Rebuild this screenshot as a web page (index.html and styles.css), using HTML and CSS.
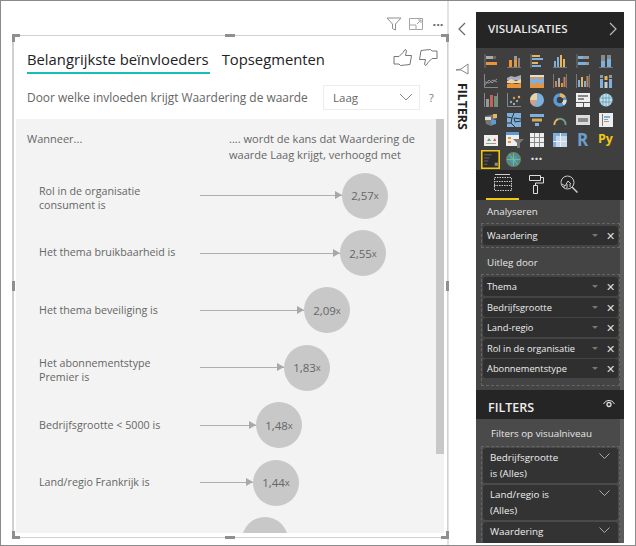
FILE: index.html
```html
<!DOCTYPE html>
<html lang="nl">
<head>
<meta charset="utf-8">
<title>Belangrijkste beïnvloeders</title>
<link rel="stylesheet" href="styles.css">
</head>
<body>
<div class="app">
  <main class="canvas">
    <div class="visual-tools">
      <svg class="tool" width="16" height="14" viewBox="0 0 16 14"><path d="M1 1h14L9.500 7v6l-3-1.500V7z" fill="none" stroke="#8f8f8f"/></svg>
      <svg class="tool" width="14" height="12" viewBox="0 0 14 12"><path d="M.5.500h13v11H.5zM7 11.500V7H.5M8 6l4-4M9 2h3v3" fill="none" stroke="#a5a5a5"/></svg>
      <span class="dots">···</span>
    </div>
    <section class="visual">
      <i class="h tl"></i><i class="h tr"></i><i class="h bl"></i><i class="h br"></i>
      <i class="m mt"></i><i class="m mb"></i><i class="m ml"></i><i class="m mr"></i>
      <div class="tabs">
        <span class="tab active">Belangrijkste beïnvloeders</span>
        <span class="tab">Topsegmenten</span>
        <span class="thumbs">
          <svg width="20" height="18" viewBox="0 0 20 18"><path d="M1 7.500h5l4-4 2-3 1.500 1-1 5h6l-1.500 9-9.500 1-1.500-1.500H1z" fill="none" stroke="#777"/></svg>
          <svg width="20" height="18" viewBox="0 0 20 18"><path d="M19 9.500h-5l-4 4-2 3-1.500-1 1-5h-6l1.500-9 9.500-1 1.500 1.500H19z" fill="none" stroke="#777"/></svg>
        </span>
      </div>
      <div class="question">
        <span class="q-text">Door welke invloeden krijgt Waardering de waarde</span>
        <span class="select">Laag<svg width="14" height="8" viewBox="0 0 14 8"><path d="M1 1l6 6 6-6" fill="none" stroke="#888"/></svg></span>
        <span class="help">?</span>
      </div>
      <div class="chart">
        <div class="scroll"></div>
        <div class="chart-head">
          <span>Wanneer...</span>
          <span class="chart-head-r">.... wordt de kans dat Waardering de waarde Laag krijgt, verhoogd met</span>
        </div>
        <div class="row">
          <span class="label two">Rol in de organisatie consument is</span>
          <span class="line" style="width:142px"></span><span class="bubble">2,57<small>x</small></span>
        </div>
        <div class="row">
          <span class="label">Het thema bruikbaarheid is</span>
          <span class="line" style="width:140px"></span><span class="bubble">2,55<small>x</small></span>
        </div>
        <div class="row">
          <span class="label">Het thema beveiliging is</span>
          <span class="line" style="width:104px"></span><span class="bubble">2,09<small>x</small></span>
        </div>
        <div class="row">
          <span class="label two">Het abonnementstype Premier is</span>
          <span class="line" style="width:84px"></span><span class="bubble">1,83<small>x</small></span>
        </div>
        <div class="row">
          <span class="label">Bedrijfsgrootte &lt; 5000 is</span>
          <span class="line" style="width:56px"></span><span class="bubble">1,48<small>x</small></span>
        </div>
        <div class="row">
          <span class="label">Land/regio Frankrijk is</span>
          <span class="line" style="width:53px"></span><span class="bubble">1,44<small>x</small></span>
        </div>
        <div class="row">
          <span class="label"></span>
          <span class="line hidden" style="width:42px"></span><span class="bubble"></span>
        </div>
      </div>
    </section>
  </main>

  <aside class="strip">
    <svg class="collapse" width="9" height="14" viewBox="0 0 9 14"><path d="M8 1L2 7l6 6" fill="none" stroke="#666" stroke-width="1.200"/></svg>
    <svg class="funnel" width="14" height="12" viewBox="0 0 14 12"><path d="M13 1v10L6 7H1l5-1z" fill="none" stroke="#888"/></svg>
    <span class="strip-title">FILTERS</span>
  </aside>

  <div class="pane">
    <header class="pane-head"><span>VISUALISATIES</span>
      <svg width="8" height="14" viewBox="0 0 8 14"><path d="M1 1l6 6-6 6" fill="none" stroke="#bbb" stroke-width="1.200"/></svg>
    </header>
    <div class="gallery">
      <svg viewBox="0 0 14 14"><path d="M1 0v14" stroke="#777"/><path d="M2 2h7v3H2z" fill="#aaa"/><path d="M2 8h11v3H2z" fill="#e8943a"/><path d="M9 2h3v3H9z" fill="#666"/></svg>
      <svg viewBox="0 0 14 14"><path d="M0 13.500h14" stroke="#777"/><path d="M2 6h3v7H2z" fill="#e8943a"/><path d="M7 2h3v11H7z" fill="#e8943a"/><path d="M7 2h3v4H7z" fill="#999"/><path d="M11 4h2v9h-2z" fill="#888"/></svg>
      <svg viewBox="0 0 14 14"><path d="M1 0v14" stroke="#777"/><path d="M2 1h8v2H2z" fill="#e8b45c"/><path d="M2 4h11v2H2z" fill="#7db0dc"/><path d="M2 8h6v2H2z" fill="#e8b45c"/><path d="M2 11h9v2H2z" fill="#7db0dc"/></svg>
      <svg viewBox="0 0 14 14"><path d="M0 13.500h14" stroke="#777"/><path d="M1 7h2v6H1z" fill="#7db0dc"/><path d="M4 3h2v10H4z" fill="#7db0dc"/><path d="M7 1h2v12H7z" fill="#e8b45c"/><path d="M10 5h2v8h-2z" fill="#e8b45c"/></svg>
      <svg viewBox="0 0 14 14"><path d="M1 0v14" stroke="#777"/><path d="M2 2h5v3H2z" fill="#7db0dc"/><path d="M7 2h6v3H7z" fill="#999"/><path d="M2 8h8v3H2z" fill="#7db0dc"/><path d="M10 8h3v3h-3z" fill="#999"/></svg>
      <svg viewBox="0 0 14 14"><path d="M0 13.500h14" stroke="#777"/><path d="M2 1h4v6H2z" fill="#8a8a8a"/><path d="M2 7h4v6H2z" fill="#7db0dc"/><path d="M8 1h4v4H8z" fill="#8a8a8a"/><path d="M8 5h4v8H8z" fill="#7db0dc"/></svg>

      <svg viewBox="0 0 14 14"><path d="M.5 0v13.500H14" fill="none" stroke="#888"/><path d="M1 11l4-5 3 3 5-4" fill="none" stroke="#c9825a"/><path d="M1 8l4 1 4-3 4 2" fill="none" stroke="#6d9ec9"/></svg>
      <svg viewBox="0 0 14 14"><path d="M0 4l4-2 4 1 6-2v5H0z" fill="#aab"/><path d="M0 7l4-2 5 2 5-2v4H0z" fill="#e9d2a8"/><path d="M0 10l5-1 4 1 5-1v5H0z" fill="#e8943a"/></svg>
      <svg viewBox="0 0 14 14"><path d="M0 3h14v11H0z" fill="#e8943a"/><path d="M0 3l3 3 4-3 3 3 4-3v5l-4 3-3-3-3 3-4-3z" fill="#7db0dc"/><path d="M0 1h14v2H0z" fill="#ddd"/></svg>
      <svg viewBox="0 0 14 14"><path d="M.5 0v14M13.500 0v14" stroke="#777"/><path d="M2 7h2v6H2z" fill="#c9825a"/><path d="M5 4h2v9H5z" fill="#aaa"/><path d="M8 9h2v4H8z" fill="#e8943a"/><path d="M10.500 3h2v10h-2z" fill="#c9825a"/></svg>
      <svg viewBox="0 0 14 14"><path d="M.5 0v14M13.500 0v14" stroke="#777"/><path d="M2 6h2v7H2z" fill="#7db0dc"/><path d="M5 3h2v10H5z" fill="#e8b45c"/><path d="M8 7h2v6H8z" fill="#7db0dc"/><path d="M10.500 2h2v11h-2z" fill="#c9825a"/></svg>
      <svg viewBox="0 0 14 14"><path d="M1 5h3v9H1z" fill="#7db0dc"/><path d="M5.500 2h3v4h-3z" fill="#e8b45c"/><path d="M5.500 8h3v6h-3z" fill="#ccc"/><path d="M10 5h3v9h-3z" fill="#7db0dc"/><path d="M1 1h3v3H1zM10 1h3v3h-3z" fill="#999"/></svg>

      <svg viewBox="0 0 14 14"><path d="M.5 0v14M13.500 0v14" stroke="#888"/><path d="M2 6h3v8H2z" fill="#999"/><path d="M6 2h3v12H6z" fill="#c9605a"/><path d="M10 3h3v11h-3z" fill="#6c8f78"/></svg>
      <svg viewBox="0 0 14 14"><path d="M.5 0v13.500H14" fill="none" stroke="#888"/><circle cx="4" cy="9" r="1.200" fill="#7db0dc"/><circle cx="7" cy="5" r="1.200" fill="#e8943a"/><circle cx="10" cy="8" r="1.200" fill="#7db0dc"/><circle cx="12" cy="4" r="1.200" fill="#e8b45c"/><circle cx="7" cy="11" r="1" fill="#ccc"/></svg>
      <svg viewBox="0 0 14 14"><circle cx="7" cy="7" r="7" fill="#7db0dc"/><path d="M7 7V0a7 7 0 0 0-7 7z" fill="#e9d2a8"/><path d="M7 7H0a7 7 0 0 0 4 6z" fill="#d9a07a"/></svg>
      <svg viewBox="0 0 14 14"><circle cx="7" cy="7" r="5" fill="none" stroke="#5b9bd5" stroke-width="3.500"/><path d="M7 2a5 5 0 0 1 4 2.500" fill="none" stroke="#e8b45c" stroke-width="3.500"/><path d="M12 7a5 5 0 0 1-2 4" fill="none" stroke="#ddd" stroke-width="3.500"/></svg>
      <svg viewBox="0 0 14 14"><path d="M0 0h14v14H0z" fill="#eee"/><path d="M2 2h10v2H2zM2 5h6v2H2z" fill="#888"/><path d="M0 9h14v1H0zM7 10h1v4H7z" fill="#555"/></svg>
      <svg viewBox="0 0 14 14"><circle cx="7" cy="7" r="6.500" fill="#bfe0ee"/><path d="M0 5h14M0 9h14M4 1v12M10 1v12M7 0v14" stroke="#5a8fa8" stroke-width=".7"/></svg>

      <svg viewBox="0 0 14 14"><path d="M1 3l6-1 6-1v4l-3 2 1 4-4 2-5-2-1-5z" fill="#777"/><path d="M7 7l5 0v4l-5 1z" fill="#5b9bd5"/><path d="M9 1h4v4H9z" fill="#e8b45c"/><path d="M1 4h6v3H1z" fill="#ddd"/></svg>
      <svg viewBox="0 0 14 14"><path d="M0 0h14v14H0z" fill="#7db0dc"/><path d="M0 4l5 1 2-5M7 5l7 1M5 5l-1 5-4 0M4 10l4 4M8 9l6-1M7 5l1 4" fill="none" stroke="#333"/></svg>
      <svg viewBox="0 0 14 14"><path d="M0 1h14v3H0z" fill="#7db0dc"/><path d="M2 5.500h10v3H2z" fill="#e8b45c" opacity=".9"/><path d="M5 10h4v3H5z" fill="#7db0dc"/></svg>
      <svg viewBox="0 0 14 14"><path d="M1.500 12a5.500 5.500 0 0 1 4-6" fill="none" stroke="#e8b45c" stroke-width="2"/><path d="M5.500 6a5.500 5.500 0 0 1 7 6" fill="none" stroke="#6c9f8e" stroke-width="2"/></svg>
      <svg viewBox="0 0 14 14"><path d="M0 2h14v10H0z" fill="#ddd"/><path d="M2 5h10v4H2z" fill="#8a8a8a"/></svg>
      <svg viewBox="0 0 14 14"><path d="M0 0h14v14H0z" fill="#eee"/><path d="M3 1h1v12H3z" fill="#777"/><path d="M5 3h6v2H5z" fill="#7db0dc"/><path d="M5 6h4v1H5zM5 8h5v1H5z" fill="#999"/></svg>

      <svg viewBox="0 0 14 14"><path d="M0 2h14v11H0z" fill="#eee"/><path d="M5 5l2 3H3z" fill="#5aa06e"/><path d="M9 8l2-3 1 3z" fill="#d9534f"/><path d="M2 10h10v1H2z" fill="#999"/></svg>
      <svg viewBox="0 0 18 16" class="wide"><path d="M0 0h13v14H0z" fill="#eee"/><path d="M0 0h13v3H0z" fill="#5b9bd5"/><path d="M2 5h3v2H2zM2 9h3v2H2z" fill="#e8943a"/><path d="M7 7h11l-4 4v5h-3v-5z" fill="#777"/></svg>
      <svg viewBox="0 0 14 14"><path d="M0 0h14v14H0z" fill="#eee"/><path d="M4.500 0v14M9.500 0v14M0 4.500h14M0 9.500h14" stroke="#8a8a8a"/></svg>
      <svg viewBox="0 0 14 14"><path d="M0 0h14v14H0z" fill="#c5d7e8"/><path d="M0 0h14v3H0zM0 0h3v14H0z" fill="#7db0dc"/><path d="M7.500 0v14M0 8.500h14" stroke="#eee"/></svg>
      <span class="glyph r">R</span>
      <span class="glyph py">Py</span>

      <svg class="selected" viewBox="0 0 18 18"><path d="M.75.750h16.500v16.500H.75z" fill="#2c2c2c" stroke="#f2c811" stroke-width="1.500"/><path d="M3 4h7v1H3zM3 7h5v1H3zM3 10h4v1H3zM3 13h3v1H3z" fill="#666"/><path d="M13 12h3v3h-3z" fill="#8a8a8a"/></svg>
      <svg viewBox="0 0 14 14" class="globe"><circle cx="7" cy="7" r="7" fill="#5b8a78"/><path d="M3 3l4 2 3-2 1 4-4 5-3-3z" fill="#4e93d1"/><path d="M1 7h12M7 1v12M3 2l8 10" stroke="#7cc07c" stroke-width=".8"/></svg>
      <span class="glyph more">···</span>
    </div>
    <nav class="pane-tabs">
      <span class="pane-tab on"><svg width="18" height="17" viewBox="0 0 18 17"><path d="M1 .500h15" stroke="#ccc"/><path d="M.5 3.500h17v13H.5z" fill="none" stroke="#ccc" stroke-dasharray="1.500 1"/><path d="M0 7.500h18M0 11.500h18" stroke="#ccc" stroke-dasharray="1.500 1"/></svg></span>
      <span class="pane-tab"><svg width="16" height="20" viewBox="0 0 16 20"><path d="M1.500 1.500h11v5h-11zM12.500 3.500h3v5.500h-8v2.500M5.500 11.500h4v8h-4z" fill="none" stroke="#ddd"/></svg></span>
      <span class="pane-tab"><svg width="18" height="18" viewBox="0 0 18 18"><circle cx="7.500" cy="7.500" r="6.500" fill="none" stroke="#ccc"/><path d="M12 12l5.500 5.500" stroke="#ccc" stroke-width="1.500"/><path d="M2 9l3 2 3-5 3 3M4 11v2M7 9v4M10 9v3" fill="none" stroke="#ccc"/></svg></span>
    </nav>
    <div class="pane-body">
      <div class="fields">
        <div class="well-title first">Analyseren</div>
        <div class="well">
          <div class="field"><span>Waardering</span><i class="caret"></i><b class="x">✕</b></div>
        </div>
        <div class="well-title second">Uitleg door</div>
        <div class="well tall">
          <div class="field"><span>Thema</span><i class="caret"></i><b class="x">✕</b></div>
          <div class="field"><span>Bedrijfsgrootte</span><i class="caret"></i><b class="x">✕</b></div>
          <div class="field"><span>Land-regio</span><i class="caret"></i><b class="x">✕</b></div>
          <div class="field"><span>Rol in de organisatie</span><i class="caret"></i><b class="x">✕</b></div>
          <div class="field"><span>Abonnementstype</span><i class="caret"></i><b class="x">✕</b></div>
        </div>
      </div>
      <div class="filters-head"><span>FILTERS</span>
        <svg width="12" height="9" viewBox="0 0 12 9"><path d="M.5 5a6 6 0 0 1 11 0" fill="none" stroke="#ddd"/><circle cx="6" cy="5.500" r="2" fill="none" stroke="#ddd" stroke-width="1.300"/></svg>
      </div>
      <div class="filters">
        <div class="well-title level">Filters op visualniveau</div>
        <div class="well filter-well">
          <div class="card"><span>Bedrijfsgrootte<br>is (Alles)</span><svg width="11" height="6" viewBox="0 0 11 6"><path d="M.5.500l5 5 5-5" fill="none" stroke="#aaa"/></svg></div>
          <div class="card"><span>Land/regio is<br>(Alles)</span><svg width="11" height="6" viewBox="0 0 11 6"><path d="M.5.500l5 5 5-5" fill="none" stroke="#aaa"/></svg></div>
          <div class="card"><span>Waardering</span><svg width="11" height="6" viewBox="0 0 11 6"><path d="M.5.500l5 5 5-5" fill="none" stroke="#aaa"/></svg></div>
        </div>
      </div>
    </div>
  </div>
</div>
</body>
</html>
```
FILE: styles.css
```css
* { box-sizing: border-box; }
html, body { margin: 0; padding: 0; background: #fff; }
body { font-family: "Open Sans", "Noto Sans", sans-serif; overflow: hidden; }

.app {
  width: 636px; height: 546px;
  display: flex;
  border: 1px solid #8a8a8a;
  overflow: hidden;
}

/* report canvas */
.canvas { width: 448px; flex: none; padding: 11px 0 0 11px; border-right: 2px solid #e3e3e3; height: 544px; }
.visual-tools { height: 23px; display: flex; align-items: center; justify-content: flex-end; gap: 7px; padding: 1px 3px 0 0; margin-right: -2px; }
.tool { display: block; }
.dots { color: #666; font-size: 13px; font-weight: 700; width: 16px; text-align: center; line-height: 14px; }

.visual {
  position: relative;
  width: 436px; height: 503px;
  border: solid #d0d0d0; border-width: 1px 1px 1px 2px;
  padding: 0 3px 4px 2px;
  display: flex; flex-direction: column;
}
.h { position: absolute; width: 8px; height: 8px; border: solid #8f8f8f; border-width: 0; }
.tl { left: -2px; top: -2px; border-width: 3px 0 0 3px; }
.tr { right: -2px; top: -2px; border-width: 3px 3px 0 0; }
.bl { left: -2px; bottom: -2px; border-width: 0 0 3px 3px; }
.br { right: -2px; bottom: -2px; border-width: 0 3px 3px 0; }
.m { position: absolute; background: #8f8f8f; }
.mt { left: 211px; top: -2px; width: 10px; height: 3px; }
.mb { left: 211px; bottom: -2px; width: 10px; height: 3px; }
.ml { left: -2px; top: 245px; width: 3px; height: 10px; }
.mr { right: -2px; top: 245px; width: 3px; height: 10px; }

.tabs { height: 39px; display: flex; align-items: flex-start; padding: 11px 0 0 11px; flex: none; }
.tab { font-size: 14.800px; line-height: 24px; color: #222; height: 27px; margin-right: 12px; white-space: nowrap; }
.tab.active { border-bottom: 2px solid #14c1b4; padding-right: 1px; }
.thumbs { margin-left: auto; display: flex; gap: 5px; margin-right: 6px; margin-top: 2px; }
.thumbs svg { display: block; }

.question { height: 44px; display: flex; align-items: center; padding-left: 11px; color: #666; font-size: 11.930px; flex: none; }
.q-text { width: 296px; white-space: nowrap; }
.select { width: 97px; height: 25px; border: 1px solid #ececec; display: flex; align-items: center; justify-content: space-between; padding: 0 6px 0 9px; font-size: 11.500px; }
.help { margin-left: 9px; font-size: 11px; color: #777; }

.chart { position: relative; flex: 1; min-height: 0; background: #f3f3f3; overflow: hidden; color: #666; font-size: 10.700px; }
.scroll { position: absolute; right: 0; top: 0; width: 8px; height: 335px; background: #c8c8c8; }
.chart-head { display: flex; justify-content: space-between; padding: 12px 17px 0 11px; line-height: 15.500px; height: 48px; }
.chart-head > span:first-child { font-size: 11px; }
.chart-head-r { width: 198px; font-size: 11.050px; }
.row { height: 57.400px; display: flex; align-items: center; }
.label { width: 184px; padding-left: 23px; padding-right: 24px; line-height: 13.500px; flex: none; }
.label.two { margin-top: 6px; }
.line { position: relative; height: 1px; background: #b0b0b0; flex: none; }
.line::after { content: ""; position: absolute; right: 0; top: -4px; border: solid transparent; border-width: 4.500px 0 4.500px 7px; border-left-color: #a8a8a8; }
.line.hidden { background: none; }
.line.hidden::after { display: none; }
.bubble { width: 46px; height: 46px; border-radius: 50%; background: #c8c8c8; display: flex; align-items: center; justify-content: center; font-size: 11.500px; flex: none; color: #666; }
.bubble small { font-size: 9.500px; }

/* collapsed filter strip */
.strip { width: 27px; flex: none; display: flex; flex-direction: column; align-items: center; padding: 21px 2px 0 0; }
.strip svg { display: block; }
.funnel { margin-top: 27px; }
.strip-title { writing-mode: vertical-rl; font-size: 12.300px; font-weight: 700; color: #222; margin-top: 8px; margin-left: 2px; }

/* right pane */
.pane { width: 148px; flex: none; height: 531px; margin-top: 11px; background: #3f3f3f; display: flex; flex-direction: column; color: #eee; overflow: hidden; }
.pane-head { height: 36px; background: #252525; display: flex; justify-content: space-between; align-items: center; padding: 0 7px 3px 12px; font-size: 11.500px; font-weight: 600; color: #e8e8e8; flex: none; }
.gallery {
  height: 122px; flex: none;
  display: grid;
  grid-template-columns: repeat(6, 23px);
  grid-auto-rows: 19.700px;
  padding: 3px 0 0 3px;
  justify-items: center; align-items: center;
}
.gallery svg { width: 14px; height: 14px; display: block; }
.gallery svg.wide { width: 18px; height: 16px; margin-left: 3px; }
.gallery svg.selected { width: 19px; height: 19px; }
.gallery svg.globe { width: 15px; height: 15px; }
.glyph { font-weight: 700; line-height: 1; }
.r { color: #6d9ec9; font-size: 17px; }
.py { color: #f2c811; font-size: 12.500px; }
.more { color: #ddd; font-size: 14px; }

.pane-tabs { height: 30px; background: #252525; display: flex; flex: none; padding-left: 10px; }
.pane-tab { width: 33px; height: 30px; display: flex; align-items: center; justify-content: center; padding-bottom: 3px; }
.pane-tab.on { border-bottom: 2px solid #f2c811; }

.pane-body { position: relative; flex: 1; min-height: 0; background: #444; border-right: 4px solid #5c5c5c; }
.fields { height: 190px; padding: 0 0 0 5px; }
.well-title { font-size: 9.800px; color: #e6e6e6; line-height: 14px; padding-left: 6px; }
.well-title.first { padding-top: 5px; height: 23px; }
.well-title.second { padding-top: 8px; height: 26px; padding-left: 6px; }
.well { border: 1px dashed #666; padding: 2px 1px; }
.well.tall { padding-bottom: 8px; height: 112px; }
.field { height: 19px; background: #2f2f2f; border-radius: 3px; margin-bottom: 1.500px; display: flex; align-items: center; padding: 0 3px 0 4px; font-size: 9.300px; color: #eee; white-space: nowrap; }
.field span { flex: 1; }
.well > .field:last-child { margin-bottom: 0; }
.caret { width: 0; height: 0; border: solid transparent; border-width: 3px 3px 0; border-top-color: #777; margin-right: 7px; }
.x { font-size: 11px; color: #ddd; font-weight: 400; width: 10px; text-align: center; }

.filters-head { height: 29px; background: #252525; display: flex; justify-content: space-between; padding: 9px 9px 0 12px; font-size: 12.500px; line-height: 17px; font-weight: 600; color: #eee; margin-right: -4px; width: 148px; }
.filters-head svg { margin-top: 0; }
.filters { padding: 0 0 0 5px; background: #4a4a4a; height: 125px; overflow: hidden; }
.well-title.level { padding: 8px 0 0 10px; height: 27px; }
.filter-well { padding: 1px; height: 100px; }
.card { display: flex; justify-content: space-between; background: #333; border-radius: 3px; height: 35px; margin-bottom: 2px; padding: 2px 8px 0 7px; font-size: 9.800px; line-height: 16px; color: #eee; }
.card svg { margin-top: 3px; }
```
